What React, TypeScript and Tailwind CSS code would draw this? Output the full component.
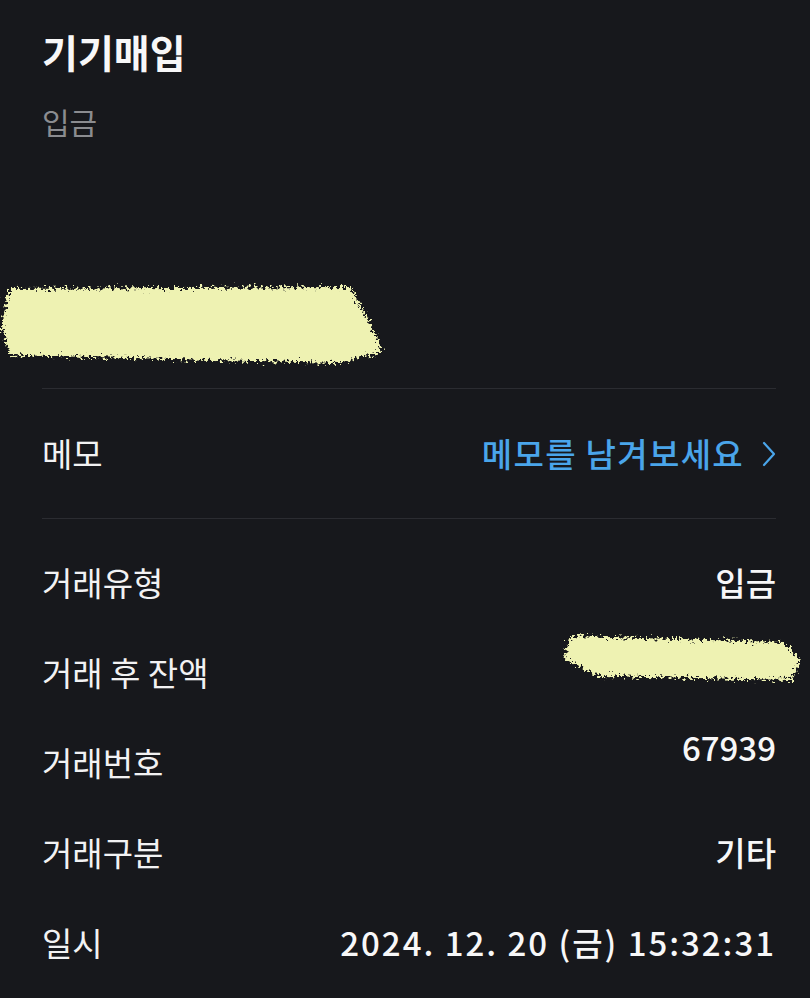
import React from "react";

const font = { fontFamily: '"Noto Sans CJK KR", "Noto Sans", sans-serif' };

function Blob({ w, h, points, id }: { w: number; h: number; points: string; id: string }) {
  return (
    <svg width={w} height={h} viewBox={`0 0 ${w} ${h}`} className="block">
      <defs>
        <filter id={id} x="-10%" y="-30%" width="120%" height="160%">
          <feTurbulence type="fractalNoise" baseFrequency="0.35" numOctaves="3" seed="3" result="n" />
          <feDisplacementMap in="SourceGraphic" in2="n" scale="14" xChannelSelector="R" yChannelSelector="G" />
        </filter>
      </defs>
      <polygon points={points} fill="#eef2b2" filter={`url(#${id})`} />
    </svg>
  );
}

function Row({ label, children, valueClass = "" }: { label: string; children: React.ReactNode; valueClass?: string }) {
  return (
    <div className="h-[90px] flex items-center justify-between">
      <span className="text-[33px] text-[#f2f2f3] leading-none">{label}</span>
      <span className={`text-[33px] text-[#f7f7f8] font-medium leading-none ${valueClass}`}>{children}</span>
    </div>
  );
}

export default function App() {
  return (
    <div className="w-[810px] h-[998px] bg-[#17181c] overflow-hidden" style={font}>
      <div className="pl-[42px] pr-[34px]">
        <div className="pt-[26px] text-[39px] leading-[50px] font-bold text-[#f7f7f8]">기기매입</div>
        <div className="mt-[25px] text-[30px] leading-[40px] text-[#8b8c90]">입금</div>
        <div className="-ml-[42px] mt-[138px] h-[90px]">
          <Blob w={400} h={90} id="b1" points="8,10 350,8 368,40 382,72 340,84 10,76 2,50" />
        </div>
        <div className="mt-[19px] h-px bg-[#2b2c31]" />
        <div className="h-[129px] flex items-center justify-between">
          <span className="text-[33px] text-[#f2f2f3] leading-none">메모</span>
          <span className="flex items-center gap-[18px] text-[33px] text-[#4aa5ea] font-medium leading-none">
            <span className="tracking-[0.04em]">메모를 남겨보세요</span>
            <svg width="14" height="26" viewBox="0 0 14 26" fill="none">
              <path d="M2 2 L12 13 L2 24" stroke="#4aa5ea" strokeWidth="2.2" strokeLinecap="round" strokeLinejoin="round" />
            </svg>
          </span>
        </div>
        <div className="h-px bg-[#2b2c31]" />
        <div className="pt-[18px]">
          <Row label="거래유형">입금</Row>
          <div className="h-[90px] flex items-center justify-between">
            <span className="text-[33px] text-[#f2f2f3] leading-none">거래 후 잔액</span>
            <div className="-mr-[32px] -mt-[30px]">
              <Blob w={250} h={70} id="b2" points="12,14 225,20 242,38 234,58 40,54 6,36" />
            </div>
          </div>
          <Row label="거래번호" valueClass="mb-[30px]">67939</Row>
          <Row label="거래구분">기타</Row>
          <Row label="일시" valueClass="tracking-[0.06em]">2024. 12. 20 (금) 15:32:31</Row>
        </div>
      </div>
    </div>
  );
}
